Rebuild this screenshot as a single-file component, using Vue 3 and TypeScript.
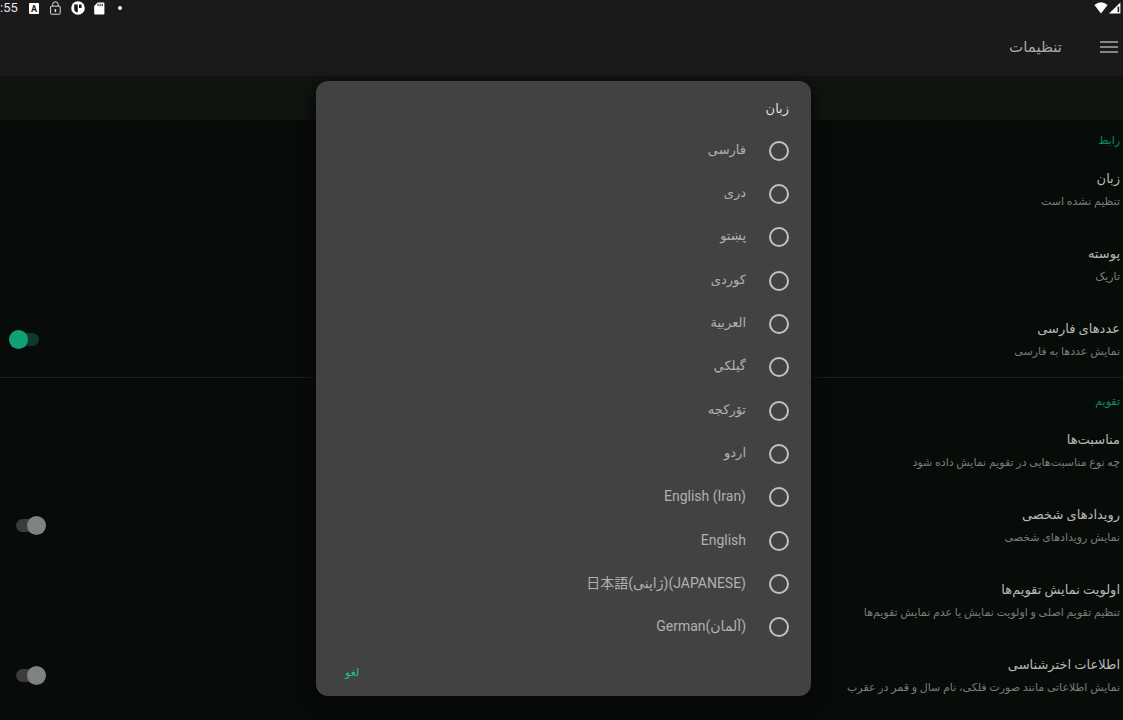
<script setup lang="ts">
import { ref } from 'vue'

interface Preference {
  id: string
  title: string
  summary: string
  toggle?: boolean
  on?: boolean
}

interface Section {
  name: string
  items: Preference[]
}

interface Language {
  name: string
  latin?: boolean
}

const sections = ref<Section[]>([
  {
    name: 'رابط',
    items: [
      { id: 'language', title: 'زبان', summary: 'تنظیم نشده است' },
      { id: 'theme', title: 'پوسته', summary: 'تاریک' },
      { id: 'digits', title: 'عددهای فارسی', summary: 'نمایش عددها به فارسی', toggle: true, on: true },
    ],
  },
  {
    name: 'تقویم',
    items: [
      { id: 'holidays', title: 'مناسبت‌ها', summary: 'چه نوع مناسبت‌هایی در تقویم نمایش داده شود' },
      { id: 'events', title: 'رویدادهای شخصی', summary: 'نمایش رویدادهای شخصی', toggle: true, on: false },
      { id: 'priority', title: 'اولویت نمایش تقویم‌ها', summary: 'تنظیم تقویم اصلی و اولویت نمایش یا عدم نمایش تقویم‌ها' },
      { id: 'astronomy', title: 'اطلاعات اخترشناسی', summary: 'نمایش اطلاعاتی مانند صورت فلکی، نام سال و قمر در عقرب', toggle: true, on: false },
    ],
  },
])

const languages: Language[] = [
  { name: 'فارسی' },
  { name: 'دری' },
  { name: 'پښتو' },
  { name: 'کوردی' },
  { name: 'العربیة' },
  { name: 'گيلکي' },
  { name: 'تۆرکجه' },
  { name: 'اردو' },
  { name: 'English (Iran)', latin: true },
  { name: 'English', latin: true },
  { name: '日本語(ژاپنی)(JAPANESE)', latin: true },
  { name: 'German(آلمان)', latin: true },
]

const selected = ref<string>('')
const dialogOpen = ref<boolean>(true)
</script>

<template>
  <div class="app" dir="rtl">
    <header class="top">
      <div class="status" dir="ltr">
        <span class="clock">:55</span>
        <svg class="s-letter" width="11" height="11" viewBox="0 0 11 11">
          <rect width="10" height="11" rx="1" fill="#fff" />
          <text x="5" y="9" text-anchor="middle" font-family="Roboto, sans-serif" font-size="9" font-weight="700" fill="#1a1a1a">A</text>
        </svg>
        <svg class="s-lock" width="11" height="14" viewBox="0 0 11 14" fill="none" stroke="#ddd">
          <rect x="0.6" y="5.2" width="9.6" height="8" rx="0.8" />
          <path d="M2.6 5V3.6a2.8 2.8 0 0 1 5.6 0V5" />
          <path d="M5.4 8v3" stroke-width="1.6" />
        </svg>
        <svg class="s-disc" width="14" height="14" viewBox="0 0 14 14">
          <circle cx="7" cy="7" r="6.8" fill="#fff" />
          <path d="M3.2 3.4h3.6v7.9h-1.6q-2-1-2-3z M8 3.4h2.6v3.6H8z" fill="#1a1a1a" />
        </svg>
        <svg class="s-card" width="11" height="13" viewBox="0 0 11 13">
          <path d="M3.6.4h5.8a1 1 0 0 1 1 1v10.2a1 1 0 0 1-1 1H1.2a1 1 0 0 1-1-1V4z" fill="#fff" />
          <path d="M4 1.8v2.4M6.1 1.8v2.4M8.2 1.8v2.4" stroke="#1a1a1a" stroke-width="1" />
        </svg>
        <span class="s-dot"></span>
        <svg class="s-signal" width="28" height="12" viewBox="0 0 28 12">
          <path d="M.4 3Q7-2.6 13.6 3L7 11.4z" fill="#fff" />
          <path d="M26.4.4v11H15z" fill="#fff" />
          <path d="M23.6 4.6h1.6v5.6h-1.6z" fill="#1a1a1a" />
        </svg>
      </div>
      <div class="toolbar">
        <button class="menu" type="button" aria-label="منو">
          <svg width="18" height="14" viewBox="0 0 18 14" stroke="#858585" stroke-width="2">
            <path d="M0 2h18M0 7h18M0 12h18" />
          </svg>
        </button>
        <h1>تنظیمات</h1>
      </div>
    </header>
    <div class="tabs"></div>

    <main class="content">
      <section v-for="section in sections" :key="section.name" class="section">
        <h2>{{ section.name }}</h2>
        <div v-for="item in section.items" :key="item.id" class="item">
          <label class="texts" :for="item.id">
            <span class="title">{{ item.title }}</span>
            <span class="summary">{{ item.summary }}</span>
          </label>
          <input v-if="item.toggle" :id="item.id" v-model="item.on" class="switch" type="checkbox" />
        </div>
      </section>
    </main>

    <div v-if="dialogOpen" class="dialog" role="dialog" aria-labelledby="dialog-title">
      <h2 id="dialog-title">زبان</h2>
      <div class="options">
        <label v-for="language in languages" :key="language.name" class="option">
          <input v-model="selected" type="radio" name="language" :value="language.name" />
          <span dir="auto" :class="{ latin: language.latin }">{{ language.name }}</span>
        </label>
      </div>
      <div class="actions">
        <button type="button" @click="dialogOpen = false">لغو</button>
      </div>
    </div>
  </div>
</template>

<style>
body {
  background: #070c08;
}
</style>

<style scoped>
.app {
  position: relative;
  display: flex;
  flex-direction: column;
  height: 100vh;
  overflow: hidden;
  background: #070c08;
  color: #a6a6a6;
  font-family: Roboto, "DejaVu Sans", "Noto Sans CJK JP", sans-serif;
}

h1,
h2 {
  margin: 0;
  font-weight: 400;
}

button {
  padding: 0;
  border: 0;
  background: none;
  font: inherit;
  cursor: pointer;
}

.top {
  flex: none;
  background: #1a1a1a;
}

.status {
  display: flex;
  align-items: center;
  height: 16px;
  color: #e4e4e4;
  font-size: 13px;
  line-height: 16px;
}

.status svg {
  flex: none;
}

.clock {
  width: 29px;
}

.s-lock {
  margin-left: 10px;
}

.s-disc {
  margin-left: 10px;
}

.s-card {
  margin-left: 9px;
}

.s-dot {
  width: 4px;
  height: 4px;
  margin-left: 13px;
  border-radius: 50%;
  background: #fff;
}

.s-signal {
  margin-left: auto;
  margin-right: 1px;
}

.toolbar {
  display: flex;
  align-items: center;
  gap: 38px;
  height: 60px;
  padding: 2px 5px 0;
  box-sizing: border-box;
}

.menu {
  display: flex;
}

.toolbar h1 {
  color: #a8a8a8;
  font-size: 15px;
}

.tabs {
  flex: none;
  height: 44px;
  background: #101510;
}

.content {
  flex: 1;
  min-height: 0;
  overflow: hidden;
}

.section + .section {
  border-top: 1px solid #1a201b;
}

.section h2 {
  height: 32px;
  padding: 0 3px;
  color: #138a62;
  font-size: 11px;
  line-height: 42px;
}

.section + .section h2 {
  height: 35px;
  line-height: 48px;
}

.item {
  display: flex;
  align-items: center;
  justify-content: space-between;
  height: 75px;
  padding: 0 3px 0 9px;
}

.texts {
  display: flex;
  flex-direction: column;
}

.title {
  color: #b8b8b8;
  font-size: 13px;
  line-height: 24px;
}

.summary {
  color: #7c7c7c;
  font-size: 11px;
  line-height: 22px;
}

.switch {
  display: grid;
  flex: none;
  align-items: center;
  width: 37px;
  height: 19px;
  margin: 0;
  appearance: none;
}

.switch::before,
.switch::after {
  grid-area: 1 / 1;
  content: "";
}

.switch::before {
  width: 28px;
  height: 13px;
  margin-right: 2px;
  border-radius: 7px;
  background: #3b3c3b;
}

.switch::after {
  width: 19px;
  height: 19px;
  border-radius: 50%;
  background: #7f827f;
}

.switch:checked::before {
  justify-self: end;
  margin: 0 0 0 2px;
  background: #0a3b2b;
}

.switch:checked::after {
  justify-self: end;
  background: #12a077;
}

.dialog {
  position: absolute;
  top: 81px;
  right: 312px;
  bottom: 24px;
  left: 316px;
  display: flex;
  flex-direction: column;
  border-radius: 12px;
  background: #424242;
  box-shadow: 0 8px 16px 4px #080808;
}

.dialog h2 {
  height: 48px;
  padding: 0 22px;
  color: #dcdcdc;
  font-size: 13px;
  line-height: 56px;
}

.options {
  display: grid;
  flex: 1;
  grid-auto-rows: 1fr;
}

.option {
  display: flex;
  align-items: center;
  gap: 23px;
  padding: 0 22px;
  color: #b0b0b0;
  font-size: 13px;
  line-height: 20px;
}

.option span {
  padding-bottom: 2px;
}

.option .latin {
  font-size: 14px;
}

.option input {
  width: 20px;
  height: 20px;
  margin: 0;
  border: 2px solid #c2c2c2;
  border-radius: 50%;
  appearance: none;
}

.option input:checked {
  border-color: #1fc08f;
  background: radial-gradient(#1fc08f 50%, transparent 55%);
}

.actions {
  display: flex;
  align-items: center;
  justify-content: flex-end;
  height: 47px;
  padding: 0 29px;
}

.actions button {
  color: #1fc08f;
  font-size: 11px;
}
</style>
